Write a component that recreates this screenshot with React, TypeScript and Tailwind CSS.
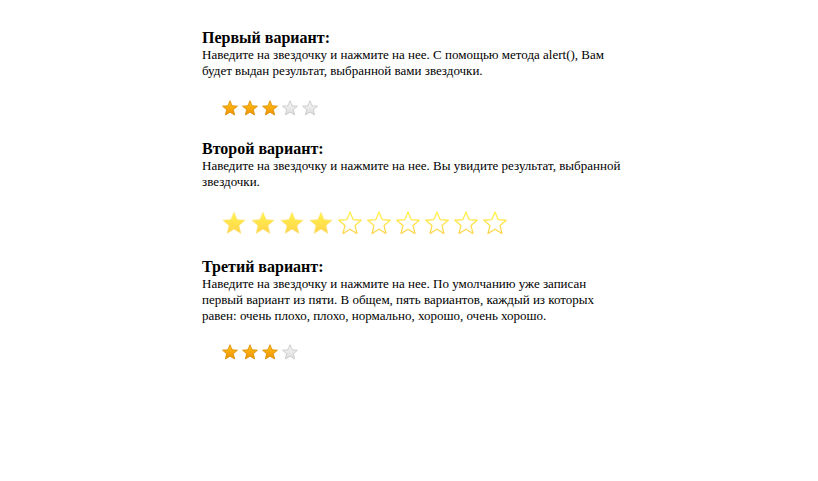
import React from 'react'

const STAR = 'M12 1.1L15.12 8.61 23.22 9.25 17.04 14.54 18.94 22.45 12 18.2 5.06 22.45 6.96 14.54 0.78 9.25 8.88 8.61Z'

function SmallStar({ on, id }: { on: boolean; id: string }) {
  return (
    <svg className="w-4 h-4" viewBox="0 0 24 24">
      <defs>
        <linearGradient id={id} x1="0" y1="0" x2="0" y2="1">
          {on ? (
            <>
              <stop offset="0" stopColor="#ffc21a" />
              <stop offset="1" stopColor="#f09300" />
            </>
          ) : (
            <>
              <stop offset="0" stopColor="#f7f7f7" />
              <stop offset="1" stopColor="#dcdcdc" />
            </>
          )}
        </linearGradient>
      </defs>
      <path
        d={STAR}
        fill={`url(#${id})`}
        stroke={on ? '#d98a00' : '#c4c4c4'}
        strokeWidth="1.2"
        strokeLinejoin="round"
      />
    </svg>
  )
}

function BigStar({ on, id }: { on: boolean; id: string }) {
  return (
    <svg className="w-6 h-6" viewBox="0 0 24 24">
      <defs>
        <linearGradient id={id} x1="0" y1="0" x2="0" y2="1">
          <stop offset="0" stopColor="#fff34a" />
          <stop offset="1" stopColor="#ffd34d" />
        </linearGradient>
      </defs>
      {on ? (
        <path d={STAR} fill={`url(#${id})`} stroke="#fde68a" strokeWidth="0.6" strokeLinejoin="round" />
      ) : (
        <path d={STAR} fill="#ffffff" stroke={`url(#${id})`} strokeWidth="1.3" strokeLinejoin="round" />
      )}
    </svg>
  )
}

function Section({ title, children }: { title: string; children: React.ReactNode }) {
  return (
    <section>
      <h2 className="text-[16px] leading-[18px] font-bold text-black">{title}</h2>
      {children}
    </section>
  )
}

export default function App() {
  return (
    <main
      className="min-h-[481px] bg-white text-black pt-[29px] pl-[202px]"
      style={{ fontFamily: '"Liberation Serif", "Times New Roman", serif' }}
    >
      <div className="w-[428px]">
        <Section title="Первый вариант:">
          <p className="text-[13px] leading-4">
            Наведите на звездочку и нажмите на нее. С помощью метода alert(), Вам будет выдан результат, выбранной вами звездочки.
          </p>
          <div className="flex gap-1 ml-5 mt-[21px]">
            {[0, 1, 2, 3, 4].map((i) => (
              <SmallStar key={i} on={i < 3} id={`s1-${i}`} />
            ))}
          </div>
        </Section>

        <div className="mt-6">
          <Section title="Второй вариант:">
            <p className="text-[13px] leading-4">
              Наведите на звездочку и нажмите на нее. Вы увидите результат, выбранной звездочки.
            </p>
            <div className="flex gap-[5px] ml-5 mt-[21px]">
              {[0, 1, 2, 3, 4, 5, 6, 7, 8, 9].map((i) => (
                <BigStar key={i} on={i < 4} id={`s2-${i}`} />
              ))}
            </div>
          </Section>
        </div>

        <div className="mt-[23px]">
          <Section title="Третий вариант:">
            <p className="text-[13px] leading-4">
              Наведите на звездочку и нажмите на нее. По умолчанию уже записан первый вариант из пяти. В общем, пять вариантов, каждый из которых равен: очень плохо, плохо, нормально, хорошо, очень хорошо.
            </p>
            <div className="flex gap-1 ml-5 mt-5">
              {[0, 1, 2, 3].map((i) => (
                <SmallStar key={i} on={i < 3} id={`s3-${i}`} />
              ))}
            </div>
          </Section>
        </div>
      </div>
    </main>
  )
}
